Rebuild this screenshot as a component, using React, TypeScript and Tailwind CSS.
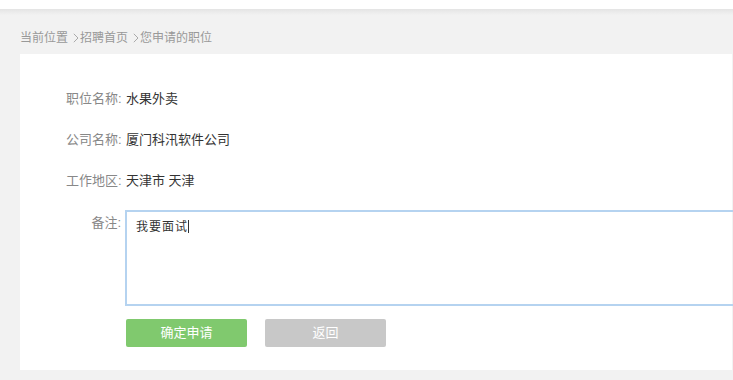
const rows = [
  { label: "职位名称:", value: "水果外卖" },
  { label: "公司名称:", value: "厦门科汛软件公司" },
  { label: "工作地区:", value: "天津市 天津" },
];

const Chevron = () => (
  <svg width="6" height="10" viewBox="0 0 6 10" className="ml-[5px] mr-[1px]">
    <path d="M0.8 0.8 L5 5 L0.8 9.2" fill="none" stroke="#aaa" strokeWidth="1" />
  </svg>
);

export default function App() {
  return (
    <div
      className="h-[380px] w-[733px] overflow-hidden bg-[#f2f2f2] text-[13px]"
      style={{ fontFamily: '"Liberation Sans", "Noto Sans CJK SC", sans-serif' }}
    >
      <div className="h-[9px] bg-white" />
      <div className="h-[6px] bg-gradient-to-b from-[#e4e4e4] to-[#f2f2f2]" />
      <div className="flex h-[39px] items-center pl-[20px] pt-[6px] text-[12px] text-[#999]">
        当前位置<Chevron />招聘首页<Chevron />您申请的职位
      </div>
      <div className="ml-[20px] h-[316px] w-[712px] bg-white pl-[46px] pt-[35px]">
        {rows.map((row) => (
          <div key={row.label} className="flex h-[41px] items-start whitespace-nowrap leading-[20px]">
            <span className="w-[55px] shrink-0 text-[#888]">{row.label}</span>
            <span className="ml-[5px] text-[#333]">{row.value}</span>
          </div>
        ))}
        <div className="mt-[-2px] flex items-start">
          <span className="mt-[3px] w-[55px] shrink-0 whitespace-nowrap text-right text-[#888]">备注:</span>
          <div className="ml-[4px] h-[96px] w-[620px] shrink-0 border-2 border-[#b5d3f0] px-[9px] py-[6px] text-[12px] tracking-[1px] text-[#333]">
            我要面试<span className="inline-block h-[13px] w-px translate-y-[2px] bg-[#333]" />
          </div>
        </div>
        <div className="ml-[60px] mt-[13px] flex gap-[18px]">
          <button className="h-[28px] w-[121px] rounded-[2px] bg-[#80c96e] text-white">确定申请</button>
          <button className="h-[28px] w-[121px] rounded-[2px] bg-[#c8c8c8] text-white">返回</button>
        </div>
      </div>
    </div>
  );
}
